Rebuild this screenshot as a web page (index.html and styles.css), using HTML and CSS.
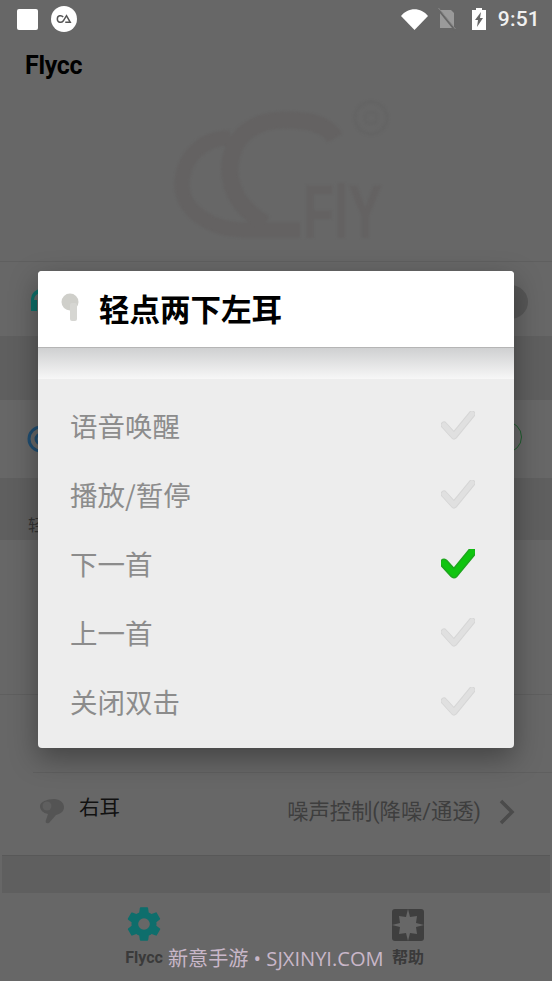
FILE: index.html
```html
<!DOCTYPE html>
<html lang="zh">
<head>
<meta charset="utf-8">
<title>Flycc</title>
<link rel="stylesheet" href="styles.css">
</head>
<body>
<div class="page">
  <header class="status">
    <div class="status-left">
      <span class="white-square"></span>
      <span class="app-badge">
        <svg viewBox="0 0 24 24" width="20" height="20"><path d="M11 9.500C9 7 4 7.500 4 12s5 5 7 2.500L15 8l4.500 8h-6" fill="none" stroke="#555" stroke-width="1.800"/></svg>
      </span>
    </div>
    <div class="status-right">
      <svg class="ic-wifi" viewBox="0 0 27 22" width="27" height="22"><path d="M0 8C7-1 20-1 27 8L13.500 22z" fill="#fff"/></svg>
      <svg class="ic-sim" viewBox="0 0 19 23" width="19" height="23"><path d="M3 2h11l3 3v15H3z" fill="#9a9a9a"/><path d="M1 1l17 21" stroke="#676767" stroke-width="2"/><path d="M1.500 0l17 21" stroke="#8a8a8a" stroke-width="1"/></svg>
      <svg class="ic-batt" viewBox="0 0 14 22" width="14" height="22"><path d="M4 0h6v2h4v20H0V2h4z" fill="#fff"/><path d="M9 4L3 12h3l-1 7 6-9H8z" fill="#676767"/></svg>
      <span class="clock">9:51</span>
    </div>
  </header>
  <div class="title">Flycc</div>
  <div class="hero">
    <svg class="logo" viewBox="0 0 300 160" width="300" height="160">
      <g fill="none" stroke="#646262">
        <path d="M70 38C40 38 22 60 22 85c0 25 28 45 63 45h55" stroke-width="15"/>
        <path d="M175 38C165 22 145 20 125 20 95 20 72 35 70 65c-2 25 12 45 35 59" stroke-width="17"/>
      </g>
      <g fill="none" stroke="#646464">
        <circle cx="211" cy="18" r="16" stroke-width="3"/>
        <circle cx="211" cy="18" r="6" stroke-width="2"/>
      </g>
      <text x="143" y="138" class="logo-text" textLength="79" lengthAdjust="spacingAndGlyphs">FlY</text>
    </svg>
  </div>

  <section class="row row-a">
    <svg class="row-ic" viewBox="0 0 30 30" width="30" height="30"><path d="M5 27V15a10 10 0 0 1 20 0v12h-6V16h3a7 7 0 0 0-14 0h3v11z" fill="#0e6e68"/></svg>
    <span class="toggle"></span>
  </section>
  <div class="band band-a"></div>
  <section class="row row-b">
    <svg class="row-ic" viewBox="0 0 30 30" width="30" height="30"><circle cx="15" cy="15" r="12" fill="none" stroke="#1f4d70" stroke-width="3"/><circle cx="15" cy="15" r="5" fill="none" stroke="#1f4d70" stroke-width="3"/></svg>
    <span class="toggle-ring"></span>
  </section>
  <div class="band band-b"><span class="band-text">轻点两下</span></div>
  <section class="row row-c"></section>
  <section class="row row-d"></section>
  <section class="row row-e">
    <svg class="ear-ic" viewBox="0 0 26 26" width="26" height="26"><path d="M15 1c6 0 10 4 10 8 0 5-4 7-8 8l-7 8c-3 1-4-1-3-3l2-6C4 15 1 12 1 8s7-7 14-7z" fill="#545454"/><circle cx="8" cy="8" r="4.500" fill="#5f5f5f"/></svg>
    <span class="ear-label">右耳</span>
    <span class="ear-value">噪声控制(降噪/通透)</span>
    <svg class="chev" viewBox="0 0 18 26" width="18" height="26"><path d="M3 2l11 11L3 24" fill="none" stroke="#4b4b4b" stroke-width="3.500"/></svg>
  </section>
  <div class="band band-c"></div>
  <nav class="tabs">
    <div class="tab tab-gear">
      <svg viewBox="0 0 24 24" width="40" height="40"><path fill="#0e6e6c" fill-rule="evenodd" d="M19.400 13c.04-.33.1-.66.1-1s-.06-.67-.1-1l2.100-1.650c.2-.15.25-.42.12-.64l-2-3.460c-.12-.22-.4-.3-.6-.22l-2.500 1c-.52-.4-1.060-.73-1.700-1l-.37-2.630A.5.5 0 0 0 14 2h-4c-.25 0-.46.18-.5.420l-.37 2.650c-.63.25-1.170.59-1.700 1l-2.490-1c-.22-.09-.49 0-.61.220l-2 3.460c-.13.22-.07.49.12.640L4.570 11c-.04.33-.07.66-.07 1s.03.65.07 1l-2.100 1.650c-.2.150-.25.420-.12.640l2 3.460c.12.220.39.3.610.220l2.490-1c.53.4 1.070.74 1.700 1l.37 2.650c.04.240.25.420.5.420h4c.25 0 .46-.18.5-.42l.37-2.650c.63-.26 1.170-.59 1.700-1l2.490 1c.22.08.49 0 .61-.22l2-3.460c.12-.22.07-.49-.12-.64zM12 15.500a3.500 3.500 0 1 1 0-7 3.500 3.500 0 0 1 0 7z"/></svg>
      <span class="tab-label">Flycc</span>
    </div>
    <div class="tab tab-help">
      <svg viewBox="0 0 32 32" width="32" height="32"><rect width="32" height="32" rx="3" fill="#3f3f3f"/><path fill="#676767" d="M16 0l2 8 7-1-1 7 8 2-8 2 1 7-7-1-2 8-2-8-7 1 1-7-8-2 8-2-1-7 7 1z"/></svg>
      <span class="tab-label">帮助</span>
    </div>
  </nav>
  <div class="watermark">新意手游 • SJXINYI.COM</div>

  <div class="dialog">
    <div class="dialog-head">
      <svg class="head-ic" viewBox="0 0 20 30" width="20" height="30"><circle cx="11" cy="9" r="8.500" fill="#cfcfca"/><rect x="11" y="10" width="7" height="18" rx="2" fill="#d6d6d2"/></svg>
      <h1 class="dialog-title">轻点两下左耳</h1>
    </div>
    <div class="dialog-shade"></div>
    <ul class="options">
      <li class="option"><span class="option-text">语音唤醒</span><svg class="check" viewBox="0 0 34 30" width="34" height="30"><path d="M3 14l10 11L31 3" class="off-edge"/><path d="M3 14l10 11L31 3" class="off-fill"/></svg></li>
      <li class="option"><span class="option-text">播放/暂停</span><svg class="check" viewBox="0 0 34 30" width="34" height="30"><path d="M3 14l10 11L31 3" class="off-edge"/><path d="M3 14l10 11L31 3" class="off-fill"/></svg></li>
      <li class="option"><span class="option-text">下一首</span><svg class="check" viewBox="0 0 34 30" width="34" height="30"><path d="M3 14l10 11L31 3" class="on-edge"/><path d="M3 14l10 11L31 3" class="on-fill"/></svg></li>
      <li class="option"><span class="option-text">上一首</span><svg class="check" viewBox="0 0 34 30" width="34" height="30"><path d="M3 14l10 11L31 3" class="off-edge"/><path d="M3 14l10 11L31 3" class="off-fill"/></svg></li>
      <li class="option"><span class="option-text">关闭双击</span><svg class="check" viewBox="0 0 34 30" width="34" height="30"><path d="M3 14l10 11L31 3" class="off-edge"/><path d="M3 14l10 11L31 3" class="off-fill"/></svg></li>
    </ul>
  </div>
</div>
</body>
</html>
```

FILE: styles.css
```css
* { box-sizing: border-box; }
html, body { margin: 0; padding: 0; }
body {
  width: 552px;
  height: 981px;
  overflow: hidden;
  background: #676767;
  font-family: Roboto, "Noto Sans CJK SC", sans-serif;
}
.page {
  position: relative;
  width: 552px;
  height: 981px;
  overflow: hidden;
  display: flex;
  flex-direction: column;
  background: #676767;
}
.status {
  height: 38px;
  flex: none;
  display: flex;
  align-items: center;
  justify-content: space-between;
  padding: 0 12px 0 17px;
}
.status-left { display: flex; align-items: center; gap: 13px; }
.white-square { width: 21px; height: 21px; background: #fff; border-radius: 2px; }
.app-badge {
  width: 26px;
  height: 26px;
  border-radius: 50%;
  background: #fff;
  display: flex;
  align-items: center;
  justify-content: center;
}
.status-right { display: flex; align-items: center; }
.ic-wifi { margin-right: 9px; }
.ic-sim { margin-right: 16px; }
.ic-batt { margin-right: 12px; }
.clock { color: #f0f0f0; font-size: 21px; font-weight: 500; letter-spacing: 0.2px; }
.title {
  flex: none;
  height: 54px;
  padding: 13px 0 0 25px;
  color: #000;
  font-size: 25px;
  line-height: 30px;
  font-weight: 700;
  letter-spacing: -0.3px;
}
.hero {
  flex: none;
  height: 170px;
  padding: 8px 0 0 160px;
  border-bottom: 1px solid #5f5f5f;
}
.logo { display: block; filter: blur(1px); }
.logo-text { font-family: "Liberation Sans", sans-serif; font-weight: 700; font-size: 76px; fill: #646262; }
.row {
  flex: none;
  display: flex;
  align-items: center;
  position: relative;
}
.row-ic { margin-left: 26px; }
.row-a { height: 75px; border-bottom: 1px solid #5f5f5f; }
.row-b { height: 78px; }
.row-c { height: 155px; border-bottom: 1px solid #5f5f5f; }
.row-d { height: 77px; }
.row-e {
  height: 83px;
  margin-left: 33px;
  border-top: 1px solid #5f5f5f;
  padding: 0 36px 0 6px;
}
.band { flex: none; background: #5f5f5f; }
.band-a { height: 63px; }
.band-b { height: 62px; padding: 38px 0 0 28px; }
.band-c { height: 38px; border-top: 1px solid #585858; margin: 0 2px; }
.band-text { font-size: 16px; line-height: 20px; color: #333; }
.toggle {
  position: absolute;
  right: 24px;
  top: 23px;
  width: 36px;
  height: 34px;
  border-radius: 50%;
  background: #575757;
}
.toggle-ring {
  position: absolute;
  right: 30px;
  top: 21px;
  width: 32px;
  height: 32px;
  border-radius: 50%;
  border: 1.500px solid #1f5c2e;
}
.ear-ic { margin-right: 14px; margin-top: -6px; }
.ear-label { color: #111; font-size: 20.500px; margin-top: -16px; }
.ear-value { margin-left: auto; color: #3e3e3e; font-size: 21.300px; margin-right: 17px; margin-top: -9px; }
.chev { flex: none; margin-top: -4px; }
.tabs {
  flex: none;
  height: 88px;
  display: grid;
  grid-template-columns: 288px 240px 24px;
}
.tab {
  display: flex;
  flex-direction: column;
  align-items: center;
  height: 88px;
}
.tab-gear { padding-top: 11px; }
.tab-help { padding-top: 16px; }
.tab-label { color: #3a3a3a; font-size: 16px; font-weight: 700; line-height: 20px; }
.tab-gear .tab-label { margin-top: 4px; }
.tab-help .tab-label { margin-top: 7px; }
.watermark {
  position: absolute;
  left: 168px;
  top: 947px;
  color: #c9b7c9;
  font-size: 20.100px;
  line-height: 24px;
  font-family: "Open Sans", "Noto Sans CJK SC", sans-serif;
  white-space: nowrap;
}
.dialog {
  position: absolute;
  left: 38px;
  top: 271px;
  width: 476px;
  height: 477px;
  border-radius: 4px;
  overflow: hidden;
  background: #ededed;
  box-shadow: 0 10px 28px rgba(0, 0, 0, 0.35);
}
.dialog-head {
  height: 77px;
  background: #fff;
  border-bottom: 1px solid #b5b5b5;
  display: flex;
  align-items: center;
  padding: 0 0 0 21px;
}
.head-ic { margin-top: -3px; }
.dialog-title {
  margin: -3px 0 0 20px;
  font-size: 30.500px;
  font-weight: 700;
  color: #000;
  font-family: "Noto Sans CJK SC", sans-serif;
  line-height: 36px;
}
.dialog-shade {
  height: 31px;
  background: linear-gradient(#cfd0d1, #f7f7f7);
}
.options {
  list-style: none;
  margin: 0;
  padding: 12px 39px 0 32px;
}
.option {
  height: 69px;
  display: flex;
  align-items: center;
  justify-content: space-between;
  color: #8c8c8c;
  font-size: 27.500px;
  font-family: "Noto Sans CJK SC", sans-serif;
}
.option-text { margin-top: -2px; }
.check path { fill: none; stroke-linejoin: round; stroke-linecap: round; }
.check .off-edge { stroke: #d6d6d6; stroke-width: 7; }
.check .off-fill { stroke: #e0e0e0; stroke-width: 5; }
.check .on-edge { stroke: #1fa51f; stroke-width: 9; }
.check .on-fill { stroke: #0fc40f; stroke-width: 6; }
```
